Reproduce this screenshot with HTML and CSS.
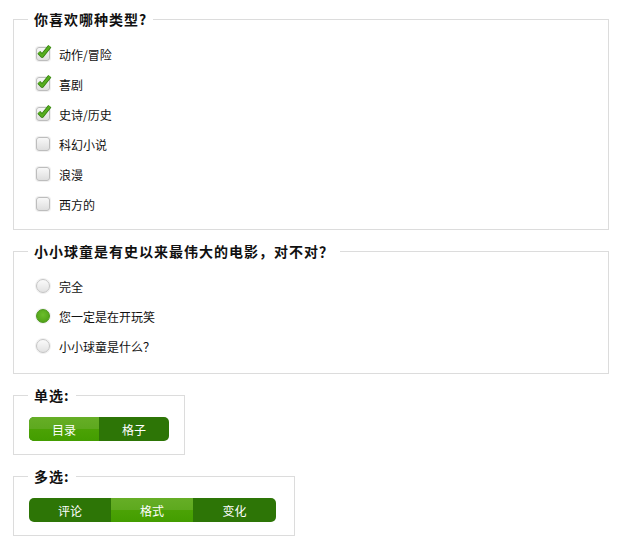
FILE: index.html
```html
<!DOCTYPE html>
<html lang="zh-CN">
<head>
    <meta charset="UTF-8">
    <title>表单</title>
    <link rel="stylesheet" href="styles.css">
</head>
<body>
    <div class="form">
        <fieldset class="group">
            <legend>你喜欢哪种类型?</legend>
            <div class="row"><span class="box checked"><svg class="tick" width="16" height="16" viewBox="0 0 16 16"><path d="M2.8 8.3 L6.2 11.8 L13.8 2.3" stroke="#2f7d0c" stroke-width="4" fill="none" stroke-linejoin="round"/><path d="M2.8 8.3 L6.2 11.8 L13.8 2.3" stroke="#56ad1f" stroke-width="2.5" fill="none" stroke-linejoin="round"/></svg></span>动作/冒险</div>
            <div class="row"><span class="box checked"><svg class="tick" width="16" height="16" viewBox="0 0 16 16"><path d="M2.8 8.3 L6.2 11.8 L13.8 2.3" stroke="#2f7d0c" stroke-width="4" fill="none" stroke-linejoin="round"/><path d="M2.8 8.3 L6.2 11.8 L13.8 2.3" stroke="#56ad1f" stroke-width="2.5" fill="none" stroke-linejoin="round"/></svg></span>喜剧</div>
            <div class="row"><span class="box checked"><svg class="tick" width="16" height="16" viewBox="0 0 16 16"><path d="M2.8 8.3 L6.2 11.8 L13.8 2.3" stroke="#2f7d0c" stroke-width="4" fill="none" stroke-linejoin="round"/><path d="M2.8 8.3 L6.2 11.8 L13.8 2.3" stroke="#56ad1f" stroke-width="2.5" fill="none" stroke-linejoin="round"/></svg></span>史诗/历史</div>
            <div class="row"><span class="box"></span>科幻小说</div>
            <div class="row"><span class="box"></span>浪漫</div>
            <div class="row"><span class="box"></span>西方的</div>
        </fieldset>

        <fieldset class="group">
            <legend>小小球童是有史以来最伟大的电影，对不对？</legend>
            <div class="row"><span class="radio"></span>完全</div>
            <div class="row"><span class="radio on"></span>您一定是在开玩笑</div>
            <div class="row"><span class="radio"></span>小小球童是什么？</div>
        </fieldset>

        <fieldset class="group small">
            <legend>单选:</legend>
            <div class="seg two">
                <span class="seg-item active">目录</span>
                <span class="seg-item">格子</span>
            </div>
        </fieldset>

        <fieldset class="group small wide">
            <legend>多选:</legend>
            <div class="seg three">
                <span class="seg-item">评论</span>
                <span class="seg-item active">格式</span>
                <span class="seg-item">变化</span>
            </div>
        </fieldset>
    </div>
</body>
</html>
```

FILE: styles.css
```css
body {
    margin: 0;
    padding: 0;
    background: #fff;
    font-family: "Noto Sans CJK SC", "Liberation Sans", sans-serif;
    font-size: 12px;
    color: #111;
}

.form {
    padding: 10px 16px 0 13px;
}

.group {
    border: 1px solid #dcdcdc;
    margin: 0 0 12px 0;
    padding: 11px 14px 10px 14px;
}

.group + .group {
    padding-bottom: 12px;
}

.group legend {
    padding: 0 6px;
    font-size: 14px;
    line-height: 18px;
    font-weight: bold;
    letter-spacing: 1px;
    color: #111;
}

.row {
    display: flex;
    align-items: center;
    height: 30px;
    padding-left: 8px;
}

.box {
    position: relative;
    width: 12px;
    height: 12px;
    border: 1px solid #bdbdbd;
    border-radius: 3px;
    background: linear-gradient(#f8f8f8, #dedede);
    box-shadow: 0 0 0 1px #f0f0f0;
    margin-right: 9px;
    flex: none;
}

.tick {
    position: absolute;
    left: -1px;
    top: -4px;
}

.radio {
    width: 12px;
    height: 12px;
    border: 1px solid #c4c4c4;
    border-radius: 50%;
    background: linear-gradient(#fafafa, #e2e2e2);
    box-shadow: 0 0 0 1px #f0f0f0;
    margin-right: 9px;
    flex: none;
}

.radio.on {
    border-color: #4a951a;
    background: radial-gradient(circle at 50% 40%, #6cbd2c, #4a9d12);
}

.group.small {
    width: fit-content;
    padding: 13px 15px 13px 14px;
    margin-bottom: 12px;
}

.group.wide {
    padding-right: 18px;
}

.group + .small {
    margin-top: 1px;
}

.seg {
    display: flex;
    margin-left: 1px;
    height: 24px;
    border-radius: 5px;
    overflow: hidden;
    background: #2d7506;
}

.seg-item {
    display: flex;
    align-items: center;
    justify-content: center;
    color: #fff;
    font-size: 12px;
}

.two .seg-item {
    width: 70px;
}

.three .seg-item {
    width: 82px;
}

.three .seg-item:last-child {
    width: 83px;
}

.seg-item.active {
    background: linear-gradient(#66ae26 0%, #5ea91f 48%, #4ba205 52%, #439d00 100%);
}
```
